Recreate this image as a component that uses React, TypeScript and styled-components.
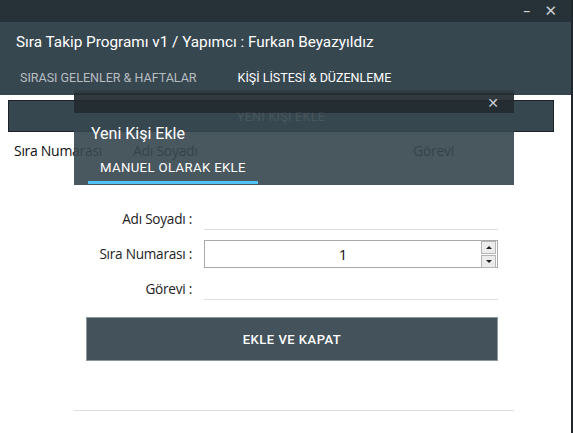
import styled, { createGlobalStyle } from "styled-components"

const GlobalStyle = createGlobalStyle`
  html, body {
    margin: 0;
    padding: 0;
    background: #ffffff;
  }
`

const Window = styled.div`
  position: relative;
  width: 573px;
  height: 433px;
  overflow: hidden;
  background: #ffffff;
  box-sizing: border-box;
  border-right: 2px solid #1f272c;
  font-family: Roboto, "Noto Sans", sans-serif;
`

const TopBar = styled.div`
  height: 22px;
  background: #263238;
  display: flex;
  justify-content: flex-end;
  align-items: center;
  gap: 14px;
  padding-right: 14px;
  color: #c9ced1;
`

const WindowButton = styled.span`
  font-size: 15px;
  line-height: 22px;
  font-family: "DejaVu Sans", sans-serif;
`

const Header = styled.div`
  height: 73px;
  background: #37474f;
  display: flex;
  flex-direction: column;
`

const Title = styled.div`
  padding: 9px 0 0 16px;
  height: 27px;
  color: #ffffff;
  font-size: 15.3px;
  line-height: 22px;
`

const Tabs = styled.div`
  display: flex;
  gap: 41px;
  padding: 12px 0 0 20px;
`

const Tab = styled.span<{ $active?: boolean }>`
  font-size: 12.5px;
  font-weight: 400;
  line-height: 16px;
  color: ${(p) => (p.$active ? "#ffffff" : "#b7bec2")};
`

const Content = styled.div`
  padding: 5px 17px 0 8px;
`

const WideButton = styled.div`
  height: 30px;
  background: #37474f;
  border: 1px solid #1c2226;
  display: flex;
  align-items: center;
  justify-content: center;
  color: rgba(255, 255, 255, 0.85);
  font-size: 12.5px;
  letter-spacing: 0.3px;
`

const ColumnRow = styled.div`
  display: flex;
  padding: 9px 0 0 6px;
  font-family: "Open Sans", "Noto Sans", sans-serif;
  font-size: 14px;
  color: #111111;
  letter-spacing: -0.3px;
`

const Column = styled.span<{ $width: number }>`
  width: ${(p) => p.$width}px;
`

const Dialog = styled.div`
  position: absolute;
  left: 74px;
  top: 90px;
  width: 440px;
  height: 321px;
  display: flex;
  flex-direction: column;
  border-bottom: 1px solid #dcdcdc;
  box-sizing: border-box;
`

const DialogTitleBar = styled.div`
  height: 23px;
  background: rgba(34, 43, 48, 0.93);
  border-top: 3px solid rgba(52, 63, 69, 0.9);
  box-sizing: border-box;
  display: flex;
  justify-content: flex-end;
  align-items: center;
  padding-right: 15px;
  color: #c9ced1;
  font-family: "DejaVu Sans", sans-serif;
  font-size: 14px;
`

const DialogHeader = styled.div`
  height: 72px;
  background: rgba(55, 71, 79, 0.91);
  display: flex;
  flex-direction: column;
`

const DialogTitle = styled.div`
  padding: 10px 0 0 17px;
  height: 23px;
  color: #ffffff;
  font-size: 16px;
  line-height: 21px;
`

const DialogTabs = styled.div`
  display: flex;
  padding: 14px 0 0 14px;
`

const DialogTab = styled.div`
  width: 170px;
  box-sizing: border-box;
  padding: 0 0 0 12px;
  height: 24px;
  border-bottom: 3px solid #4fc3f7;
  color: #ffffff;
  font-size: 13.2px;
  letter-spacing: 0.35px;
  line-height: 16px;
`

const DialogBody = styled.div`
  flex: 1;
  background: #ffffff;
  padding: 23px 16px 0 12px;
  display: flex;
  flex-direction: column;
`

const FormGrid = styled.div`
  display: grid;
  grid-template-columns: 106px 294px;
  grid-template-rows: 22px 28px 22px;
  column-gap: 12px;
  row-gap: 10px;
  align-items: center;
  font-family: "Open Sans", "Noto Sans", sans-serif;
  font-size: 13.6px;
  color: #222222;
`

const Label = styled.label`
  text-align: right;
  line-height: 22px;
  letter-spacing: -0.25px;
`

const LineInput = styled.div`
  height: 21px;
  border-bottom: 1px solid #dedede;
`

const NumberBox = styled.div`
  height: 28px;
  box-sizing: border-box;
  border: 1px solid #a9a9a9;
  display: flex;
  align-items: center;
`

const NumberValue = styled.span`
  flex: 1;
  text-align: center;
  font-size: 15px;
  color: #111111;
`

const Spinner = styled.div`
  width: 15px;
  margin-right: 1px;
  display: flex;
  flex-direction: column;
  gap: 1px;
`

const SpinButton = styled.div`
  height: 11px;
  background: #ececec;
  border: 1px solid #b5b5b5;
  display: flex;
  align-items: center;
  justify-content: center;
`

const Arrow = styled.span<{ $up?: boolean }>`
  width: 0;
  height: 0;
  border-left: 3px solid transparent;
  border-right: 3px solid transparent;
  ${(p) => (p.$up ? "border-bottom: 3px solid #222;" : "border-top: 3px solid #222;")}
`

const SubmitButton = styled.div`
  margin-top: 17px;
  height: 44px;
  background: #44525b;
  border: 1px solid #8d979c;
  box-sizing: border-box;
  display: flex;
  align-items: center;
  justify-content: center;
  color: #ffffff;
  font-size: 13px;
  font-weight: 500;
  letter-spacing: 0.5px;
`

export default function App() {
  return (
    <>
      <GlobalStyle />
      <Window>
        <TopBar>
          <WindowButton>–</WindowButton>
          <WindowButton>✕</WindowButton>
        </TopBar>
        <Header>
          <Title>Sıra Takip Programı v1 / Yapımcı : Furkan Beyazyıldız</Title>
          <Tabs>
            <Tab>SIRASI GELENLER &amp; HAFTALAR</Tab>
            <Tab $active>KİŞİ LİSTESİ &amp; DÜZENLEME</Tab>
          </Tabs>
        </Header>
        <Content>
          <WideButton>YENİ KİŞİ EKLE</WideButton>
          <ColumnRow>
            <Column $width={119}>Sıra Numarası</Column>
            <Column $width={280}>Adı Soyadı</Column>
            <Column $width={60}>Görevi</Column>
          </ColumnRow>
        </Content>

        <Dialog>
          <DialogTitleBar>✕</DialogTitleBar>
          <DialogHeader>
            <DialogTitle>Yeni Kişi Ekle</DialogTitle>
            <DialogTabs>
              <DialogTab>MANUEL OLARAK EKLE</DialogTab>
            </DialogTabs>
          </DialogHeader>
          <DialogBody>
            <FormGrid>
              <Label>Adı Soyadı :</Label>
              <LineInput />
              <Label>Sıra Numarası :</Label>
              <NumberBox>
                <NumberValue>1</NumberValue>
                <Spinner>
                  <SpinButton>
                    <Arrow $up />
                  </SpinButton>
                  <SpinButton>
                    <Arrow />
                  </SpinButton>
                </Spinner>
              </NumberBox>
              <Label>Görevi :</Label>
              <LineInput />
            </FormGrid>
            <SubmitButton>EKLE VE KAPAT</SubmitButton>
          </DialogBody>
        </Dialog>
      </Window>
    </>
  )
}
